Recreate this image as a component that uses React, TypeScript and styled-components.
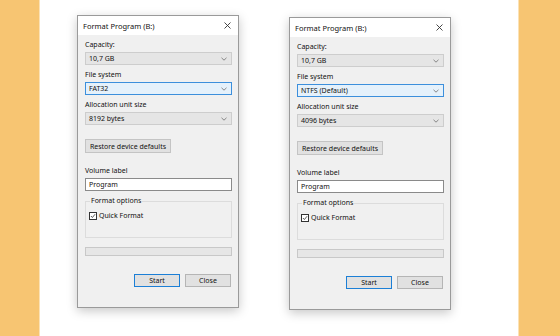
import React from "react";
import styled, { createGlobalStyle } from "styled-components";

const GlobalStyle = createGlobalStyle`
  html, body {
    margin: 0;
    padding: 0;
    background: #ffffff;
  }
  body {
    font-family: "Noto Sans", "Open Sans", sans-serif;
  }
`;

interface DialogData {
  fileSystem: string;
  unitSize: string;
  offset: number;
}

const dialogs: DialogData[] = [
  { fileSystem: "FAT32", unitSize: "8192 bytes", offset: 0 },
  { fileSystem: "NTFS (Default)", unitSize: "4096 bytes", offset: 2 },
];

const Chevron = () => (
  <svg width="6" height="4" viewBox="0 0 6 4">
    <polyline points="0.5,0.8 3,3.2 5.5,0.8" fill="none" stroke="#7a7a7a" strokeWidth="0.9" />
  </svg>
);

const CloseIcon = () => (
  <svg width="7" height="7" viewBox="0 0 7 7">
    <path d="M0.5 0.5 L6.5 6.5 M6.5 0.5 L0.5 6.5" stroke="#333" strokeWidth="0.9" />
  </svg>
);

const CheckMark = () => (
  <svg width="8" height="8" viewBox="0 0 8 8">
    <polyline points="1.2,4 3.2,6 6.8,1.6" fill="none" stroke="#222" strokeWidth="1" />
  </svg>
);

const FormatDialog = ({ data }: { data: DialogData }) => (
  <Dialog offset={data.offset}>
    <TitleBar>
      <TitleText>Format Program (B:)</TitleText>
      <CloseIcon />
    </TitleBar>
    <Body>
      <Label>Capacity:</Label>
      <Combo>
        <span>10,7 GB</span>
        <Chevron />
      </Combo>
      <Label spaced>File system</Label>
      <Combo focused>
        <span>{data.fileSystem}</span>
        <Chevron />
      </Combo>
      <Label spaced>Allocation unit size</Label>
      <Combo>
        <span>{data.unitSize}</span>
        <Chevron />
      </Combo>
      <RestoreButton>Restore device defaults</RestoreButton>
      <Label>Volume label</Label>
      <TextBox>Program</TextBox>
      <GroupBox>
        <Legend>Format options</Legend>
        <CheckRow>
          <CheckBox>
            <CheckMark />
          </CheckBox>
          <span>Quick Format</span>
        </CheckRow>
      </GroupBox>
      <Progress />
      <Buttons>
        <DialogButton primary>Start</DialogButton>
        <DialogButton>Close</DialogButton>
      </Buttons>
    </Body>
  </Dialog>
);

const App = () => (
  <>
    <GlobalStyle />
    <Page>
      <Strip side="left" />
      <Stage>
        {dialogs.map((d) => (
          <FormatDialog key={d.fileSystem} data={d} />
        ))}
      </Stage>
      <Strip side="right" />
    </Page>
  </>
);

const Page = styled.div`
  display: flex;
  width: 560px;
  height: 336px;
  overflow: hidden;
`;

const Strip = styled.div<{ side: "left" | "right" }>`
  width: ${(p) => (p.side === "left" ? "39px" : "41px")};
  flex-shrink: 0;
  background: #f7c572;
  ${(p) => (p.side === "left" ? "border-right" : "border-left")}: 1px solid #fbe2b6;
`;

const Stage = styled.div`
  flex: 1;
  display: flex;
  align-items: flex-start;
  gap: 50px;
  padding: 15px 0 0 37px;
  background: #ffffff;
`;

const Dialog = styled.div<{ offset: number }>`
  width: 160px;
  margin-top: ${(p) => p.offset}px;
  border: 1px solid #9a9a9a;
  background: #f0f0f0;
  box-shadow: 0 3px 10px rgba(0, 0, 0, 0.22);
  color: #111111;
  font-size: 7px;
`;

const TitleBar = styled.div`
  height: 19px;
  display: flex;
  align-items: center;
  justify-content: space-between;
  padding: 0 7px 0 5px;
  background: #ffffff;
`;

const TitleText = styled.span`
  font-size: 7.5px;
`;

const Body = styled.div`
  display: flex;
  flex-direction: column;
  padding: 5px 6px 20px 7px;
`;

const Label = styled.div<{ spaced?: boolean }>`
  height: 10px;
  line-height: 10px;
  margin-top: ${(p) => (p.spaced ? "5px" : "0")};
  margin-bottom: 2px;
`;

const Combo = styled.div<{ focused?: boolean }>`
  height: 13px;
  box-sizing: border-box;
  display: flex;
  align-items: center;
  justify-content: space-between;
  padding: 0 4px 0 3px;
  border: 1px solid ${(p) => (p.focused ? "#3c8fdc" : "#cdcdcd")};
  background: ${(p) => (p.focused ? "#e5f1fb" : "#e5e5e5")};
`;

const RestoreButton = styled.div`
  align-self: flex-start;
  width: 86px;
  height: 14px;
  box-sizing: border-box;
  margin: 14px 0 13px;
  display: flex;
  align-items: center;
  justify-content: center;
  border: 1px solid #c4c4c4;
  background: #e1e1e1;
`;

const TextBox = styled.div`
  height: 13px;
  box-sizing: border-box;
  display: flex;
  align-items: center;
  padding: 0 3px;
  border: 1px solid #8a8a8a;
  background: #ffffff;
`;

const GroupBox = styled.fieldset`
  margin: 5px 0 0;
  padding: 5px 4px 0 3px;
  height: 42px;
  box-sizing: border-box;
  border: 1px solid #dcdcdc;
  min-width: 0;
`;

const Legend = styled.legend`
  padding: 0 1px;
  margin-left: 1px;
  line-height: 10px;
  font-size: 7px;
`;

const CheckRow = styled.div`
  display: flex;
  align-items: center;
  gap: 2px;
`;

const CheckBox = styled.div`
  width: 8px;
  height: 8px;
  box-sizing: border-box;
  border: 1px solid #333;
  background: #ffffff;
  display: flex;
  align-items: center;
  justify-content: center;
`;

const Progress = styled.div`
  height: 9px;
  box-sizing: border-box;
  margin-top: 9px;
  border: 1px solid #c8c8c8;
  background: #e6e6e6;
`;

const Buttons = styled.div`
  display: flex;
  justify-content: flex-end;
  gap: 5px;
  margin-top: 18px;
  padding-right: 1px;
`;

const DialogButton = styled.div<{ primary?: boolean }>`
  width: 46px;
  height: 13px;
  box-sizing: border-box;
  display: flex;
  align-items: center;
  justify-content: center;
  border: 1px solid ${(p) => (p.primary ? "#1c7fd6" : "#b5b5b5")};
  background: #e1e1e1;
`;

export default App;
